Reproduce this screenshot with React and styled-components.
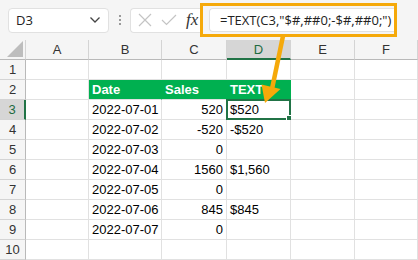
import React from 'react'
import styled, { createGlobalStyle } from 'styled-components'

const Global = createGlobalStyle`
  html, body { margin: 0; padding: 0; background: #fff; }
  body { font-family: 'Liberation Sans', Arial, sans-serif; }
`

const cols = ['A', 'B', 'C', 'D', 'E', 'F']
const widths = [26, 63, 73, 65, 64, 64, 63]

const rows = [
  {},
  { B: 'Date', C: 'Sales', D: 'TEXT', head: true },
  { B: '2022-07-01', C: '520', D: '$520' },
  { B: '2022-07-02', C: '-520', D: '-$520' },
  { B: '2022-07-03', C: '0' },
  { B: '2022-07-04', C: '1560', D: '$1,560' },
  { B: '2022-07-05', C: '0' },
  { B: '2022-07-06', C: '845', D: '$845' },
  { B: '2022-07-07', C: '0' },
  {},
]

export default function App() {
  return (
    <Page>
      <Global />
      <Toolbar>
        <NameBox>
          <span>D3</span>
          <svg width="12" height="8" viewBox="0 0 12 8">
            <path d="M1.5 1.5 L6 6 L10.5 1.5" fill="none" stroke="#444" strokeWidth="1.3" />
          </svg>
        </NameBox>
        <Dots>
          <i /><i /><i />
        </Dots>
        <IconBox>
          <svg width="14" height="14" viewBox="0 0 14 14">
            <path d="M1 1 L13 13 M13 1 L1 13" stroke="#c4c4c4" strokeWidth="1.2" />
          </svg>
          <svg width="16" height="12" viewBox="0 0 16 12">
            <path d="M1 6 L5.5 10.5 L15 1" fill="none" stroke="#c4c4c4" strokeWidth="1.2" />
          </svg>
          <Fx>fx</Fx>
        </IconBox>
        <FormulaWrap>
          <FormulaInput>=TEXT(C3,"$#,##0;-$#,##0;")</FormulaInput>
        </FormulaWrap>
      </Toolbar>
      <Grid>
        <Corner>
          <svg width="16" height="16" viewBox="0 0 16 16">
            <path d="M16 0 L16 16 L0 16 Z" fill="#bdbdbd" />
          </svg>
        </Corner>
        {cols.map(c => (
          <ColHead key={c} $active={c === 'D'}>{c}</ColHead>
        ))}
        {rows.map((r, i) => (
          <React.Fragment key={i}>
            <RowHead $active={i === 2}>{i + 1}</RowHead>
            {cols.map(c => {
              const v = r[c]
              const green = r.head && (c === 'B' || c === 'C' || c === 'D')
              return (
                <Cell key={c} $green={green} $right={!green && c === 'C'}>
                  {v}
                  {i === 2 && c === 'D' && (
                    <Selection>
                      <Handle />
                    </Selection>
                  )}
                </Cell>
              )
            })}
          </React.Fragment>
        ))}
        <Arrow width="40" height="80" viewBox="0 0 40 80">
          <path d="M31 -1 L20 52" stroke="#f5a90a" strokeWidth="4.5" fill="none" />
          <path d="M13 66 L9.5 47.5 L28.5 52 Z" fill="#f5a90a" />
        </Arrow>
      </Grid>
    </Page>
  )
}

const Page = styled.div`
  width: 418px;
  height: 260px;
  overflow: hidden;
  position: relative;
`

const Toolbar = styled.div`
  height: 40px;
  background: #f5f5f5;
  display: flex;
  align-items: center;
  padding-left: 8px;
  box-sizing: border-box;
`

const NameBox = styled.div`
  width: 101px;
  height: 25px;
  box-sizing: border-box;
  background: #fff;
  border: 1px solid #e1e1e1;
  border-radius: 4px;
  display: flex;
  align-items: center;
  justify-content: space-between;
  padding: 0 7px 0 7px;
  font-family: 'Open Sans', 'Liberation Sans', sans-serif;
  font-size: 13px;
  color: #222;
`

const Dots = styled.div`
  width: 21px;
  display: flex;
  flex-direction: column;
  align-items: center;
  gap: 2px;
  i {
    width: 2px;
    height: 2px;
    background: #9a9a9a;
  }
`

const IconBox = styled.div`
  width: 80px;
  height: 25px;
  box-sizing: border-box;
  background: #fff;
  border: 1px solid #e1e1e1;
  border-radius: 4px 0 0 4px;
  border-right: none;
  display: flex;
  align-items: center;
  gap: 9px;
  padding-left: 7px;
`

const Fx = styled.span`
  font-family: 'Liberation Serif', serif;
  font-style: italic;
  font-size: 17px;
  color: #333;
`

const FormulaWrap = styled.div`
  position: absolute;
  left: 200px;
  top: 3px;
  width: 197px;
  height: 34px;
  box-sizing: border-box;
  border: 3px solid #f5a90a;
  padding: 2px 0 2px 6px;
  display: flex;
  background: #f5f5f5;
`

const FormulaInput = styled.div`
  flex: 1;
  background: #fff;
  border: 1px solid #e1e1e1;
  border-right: none;
  border-radius: 4px 0 0 4px;
  display: flex;
  align-items: center;
  padding-left: 10px;
  font-family: 'Open Sans', 'Liberation Sans', sans-serif;
  font-size: 13px;
  color: #222;
  white-space: nowrap;
`

const Grid = styled.div`
  position: relative;
  display: grid;
  grid-template-columns: ${widths.map(w => w + 'px').join(' ')};
  grid-auto-rows: 20px;
`

const Corner = styled.div`
  background: #f5f5f5;
  border-right: 1px solid #d4d4d4;
  border-bottom: 1px solid #b9b9b9;
  box-sizing: border-box;
  display: flex;
  align-items: flex-end;
  justify-content: flex-end;
  padding: 0 2px 2px 0;
`

const ColHead = styled.div`
  box-sizing: border-box;
  background: ${p => (p.$active ? '#d6d6d6' : '#f5f5f5')};
  border-right: 1px solid #d4d4d4;
  border-bottom: ${p => (p.$active ? '2px solid #217346' : '1px solid #b9b9b9')};
  color: ${p => (p.$active ? '#1e6b41' : '#333')};
  display: flex;
  align-items: center;
  justify-content: center;
  font-size: 13px;
  padding-top: ${p => (p.$active ? '1px' : '0')};
`

const RowHead = styled.div`
  box-sizing: border-box;
  background: ${p => (p.$active ? '#d6d6d6' : '#f5f5f5')};
  border-right: ${p => (p.$active ? '2px solid #217346' : '1px solid #b9b9b9')};
  border-bottom: 1px solid #d4d4d4;
  color: ${p => (p.$active ? '#1e6b41' : '#333')};
  display: flex;
  align-items: center;
  justify-content: center;
  font-size: 13px;
`

const Cell = styled.div`
  position: relative;
  box-sizing: border-box;
  border-right: 1px solid ${p => (p.$green ? '#00b050' : '#e1e1e1')};
  border-bottom: 1px solid #e1e1e1;
  background: ${p => (p.$green ? '#00b050' : '#fff')};
  color: ${p => (p.$green ? '#fff' : '#000')};
  font-weight: ${p => (p.$green ? 'bold' : 'normal')};
  font-size: 13px;
  display: flex;
  align-items: center;
  justify-content: ${p => (p.$right ? 'flex-end' : 'flex-start')};
  padding: 0 3px;
  white-space: nowrap;
`

const Selection = styled.div`
  position: absolute;
  left: -1px;
  top: -1px;
  right: -1px;
  bottom: -1px;
  border: 2px solid #217346;
  pointer-events: none;
`

const Handle = styled.div`
  position: absolute;
  right: -4px;
  bottom: -4px;
  width: 5px;
  height: 5px;
  background: #217346;
  border: 1px solid #fff;
`

const Arrow = styled.svg`
  position: absolute;
  left: 252px;
  top: -3px;
  overflow: visible;
`
